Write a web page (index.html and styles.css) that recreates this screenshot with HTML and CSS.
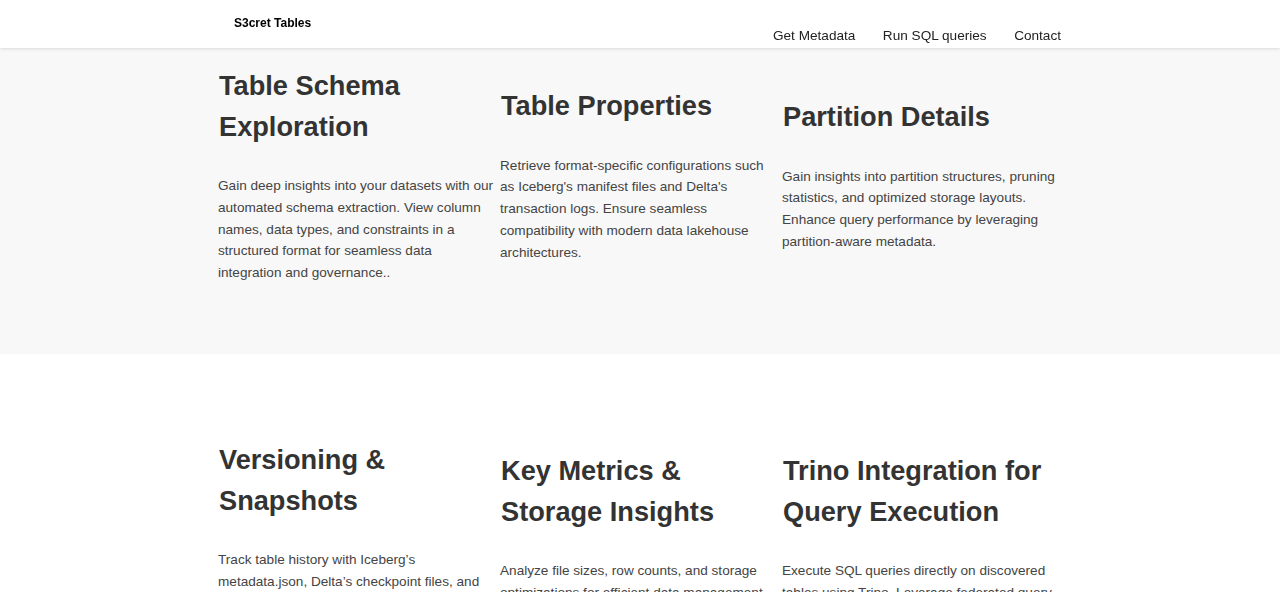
FILE: index.html
```html
<!DOCTYPE html>
<html lang="en">
<head>
<meta charset="utf-8">
<title>S3cret Tables</title>
<link rel="stylesheet" href="styles.css">
</head>
<body>
<header class="site-header">
  <div class="header-inner">
    <div class="logo">S3cret Tables</div>
    <nav class="nav">
      <a href="#">Get Metadata</a>
      <a href="#">Run SQL queries</a>
      <a href="#">Contact</a>
    </nav>
  </div>
</header>

<section class="features features-grey">
  <div class="grid">
    <div class="feature">
      <h2>Table Schema Exploration</h2>
      <p>Gain deep insights into your datasets with our automated schema extraction. View column names, data types, and constraints in a structured format for seamless data integration and governance..</p>
    </div>
    <div class="feature">
      <h2>Table Properties</h2>
      <p>Retrieve format-specific configurations such as Iceberg's manifest files and Delta's transaction logs. Ensure seamless compatibility with modern data lakehouse architectures.</p>
    </div>
    <div class="feature">
      <h2>Partition Details</h2>
      <p>Gain insights into partition structures, pruning statistics, and optimized storage layouts. Enhance query performance by leveraging partition-aware metadata.</p>
    </div>
  </div>
</section>

<section class="features features-white">
  <div class="grid">
    <div class="feature">
      <h2>Versioning &amp; Snapshots</h2>
      <p>Track table history with Iceberg’s metadata.json, Delta’s checkpoint files, and Hudi’s commit timeline. Explore snapshots and time-travel to any previous version of your tables.</p>
    </div>
    <div class="feature">
      <h2>Key Metrics &amp; Storage Insights</h2>
      <p>Analyze file sizes, row counts, and storage optimizations for efficient data management. Spot small files and plan compaction to keep storage costs under control.</p>
    </div>
    <div class="feature">
      <h2>Trino Integration for Query Execution</h2>
      <p>Execute SQL queries directly on discovered tables using Trino. Leverage federated query capabilities to explore data across catalogs without moving a single byte.</p>
    </div>
  </div>
</section>
</body>
</html>
```

FILE: styles.css
```css
* {
  box-sizing: border-box;
}

html, body {
  margin: 0;
  padding: 0;
}

body {
  font-family: "Liberation Sans", Arial, sans-serif;
  background: #ffffff;
  color: #444444;
}

.site-header {
  position: fixed;
  top: 0;
  left: 0;
  right: 0;
  height: 48px;
  background: #ffffff;
  box-shadow: 0 1px 3px rgba(0, 0, 0, 0.12);
  z-index: 10;
}

.header-inner {
  width: 846px;
  margin: 0 auto;
  height: 100%;
  display: flex;
  justify-content: space-between;
  align-items: flex-start;
  padding: 0 2px 0 17px;
}

.logo {
  font-size: 12px;
  font-weight: bold;
  color: #000000;
  line-height: 14px;
  padding-top: 16px;
}

.nav {
  display: flex;
  gap: 27.5px;
  padding-top: 27px;
}

.nav a {
  font-size: 13.6px;
  line-height: 18px;
  color: #222222;
  text-decoration: none;
}

.features-grey {
  background: #f8f8f8;
  padding: 66px 0 70px;
}

.features-white {
  background: #ffffff;
  padding: 86px 0 70px;
}

.grid {
  width: 846px;
  margin: 0 auto;
  display: grid;
  grid-template-columns: repeat(3, 282px);
  align-items: center;
}

.feature {
  padding-left: 1px;
}

.feature h2 {
  margin: 0 0 27.5px;
  font-size: 27.2px;
  line-height: 1.5;
  font-weight: bold;
  color: #333333;
  padding-left: 1px;
}

.feature p {
  margin: 0;
  font-size: 13.6px;
  line-height: 1.6;
  color: #444444;
  padding-right: 2px;
}
```
